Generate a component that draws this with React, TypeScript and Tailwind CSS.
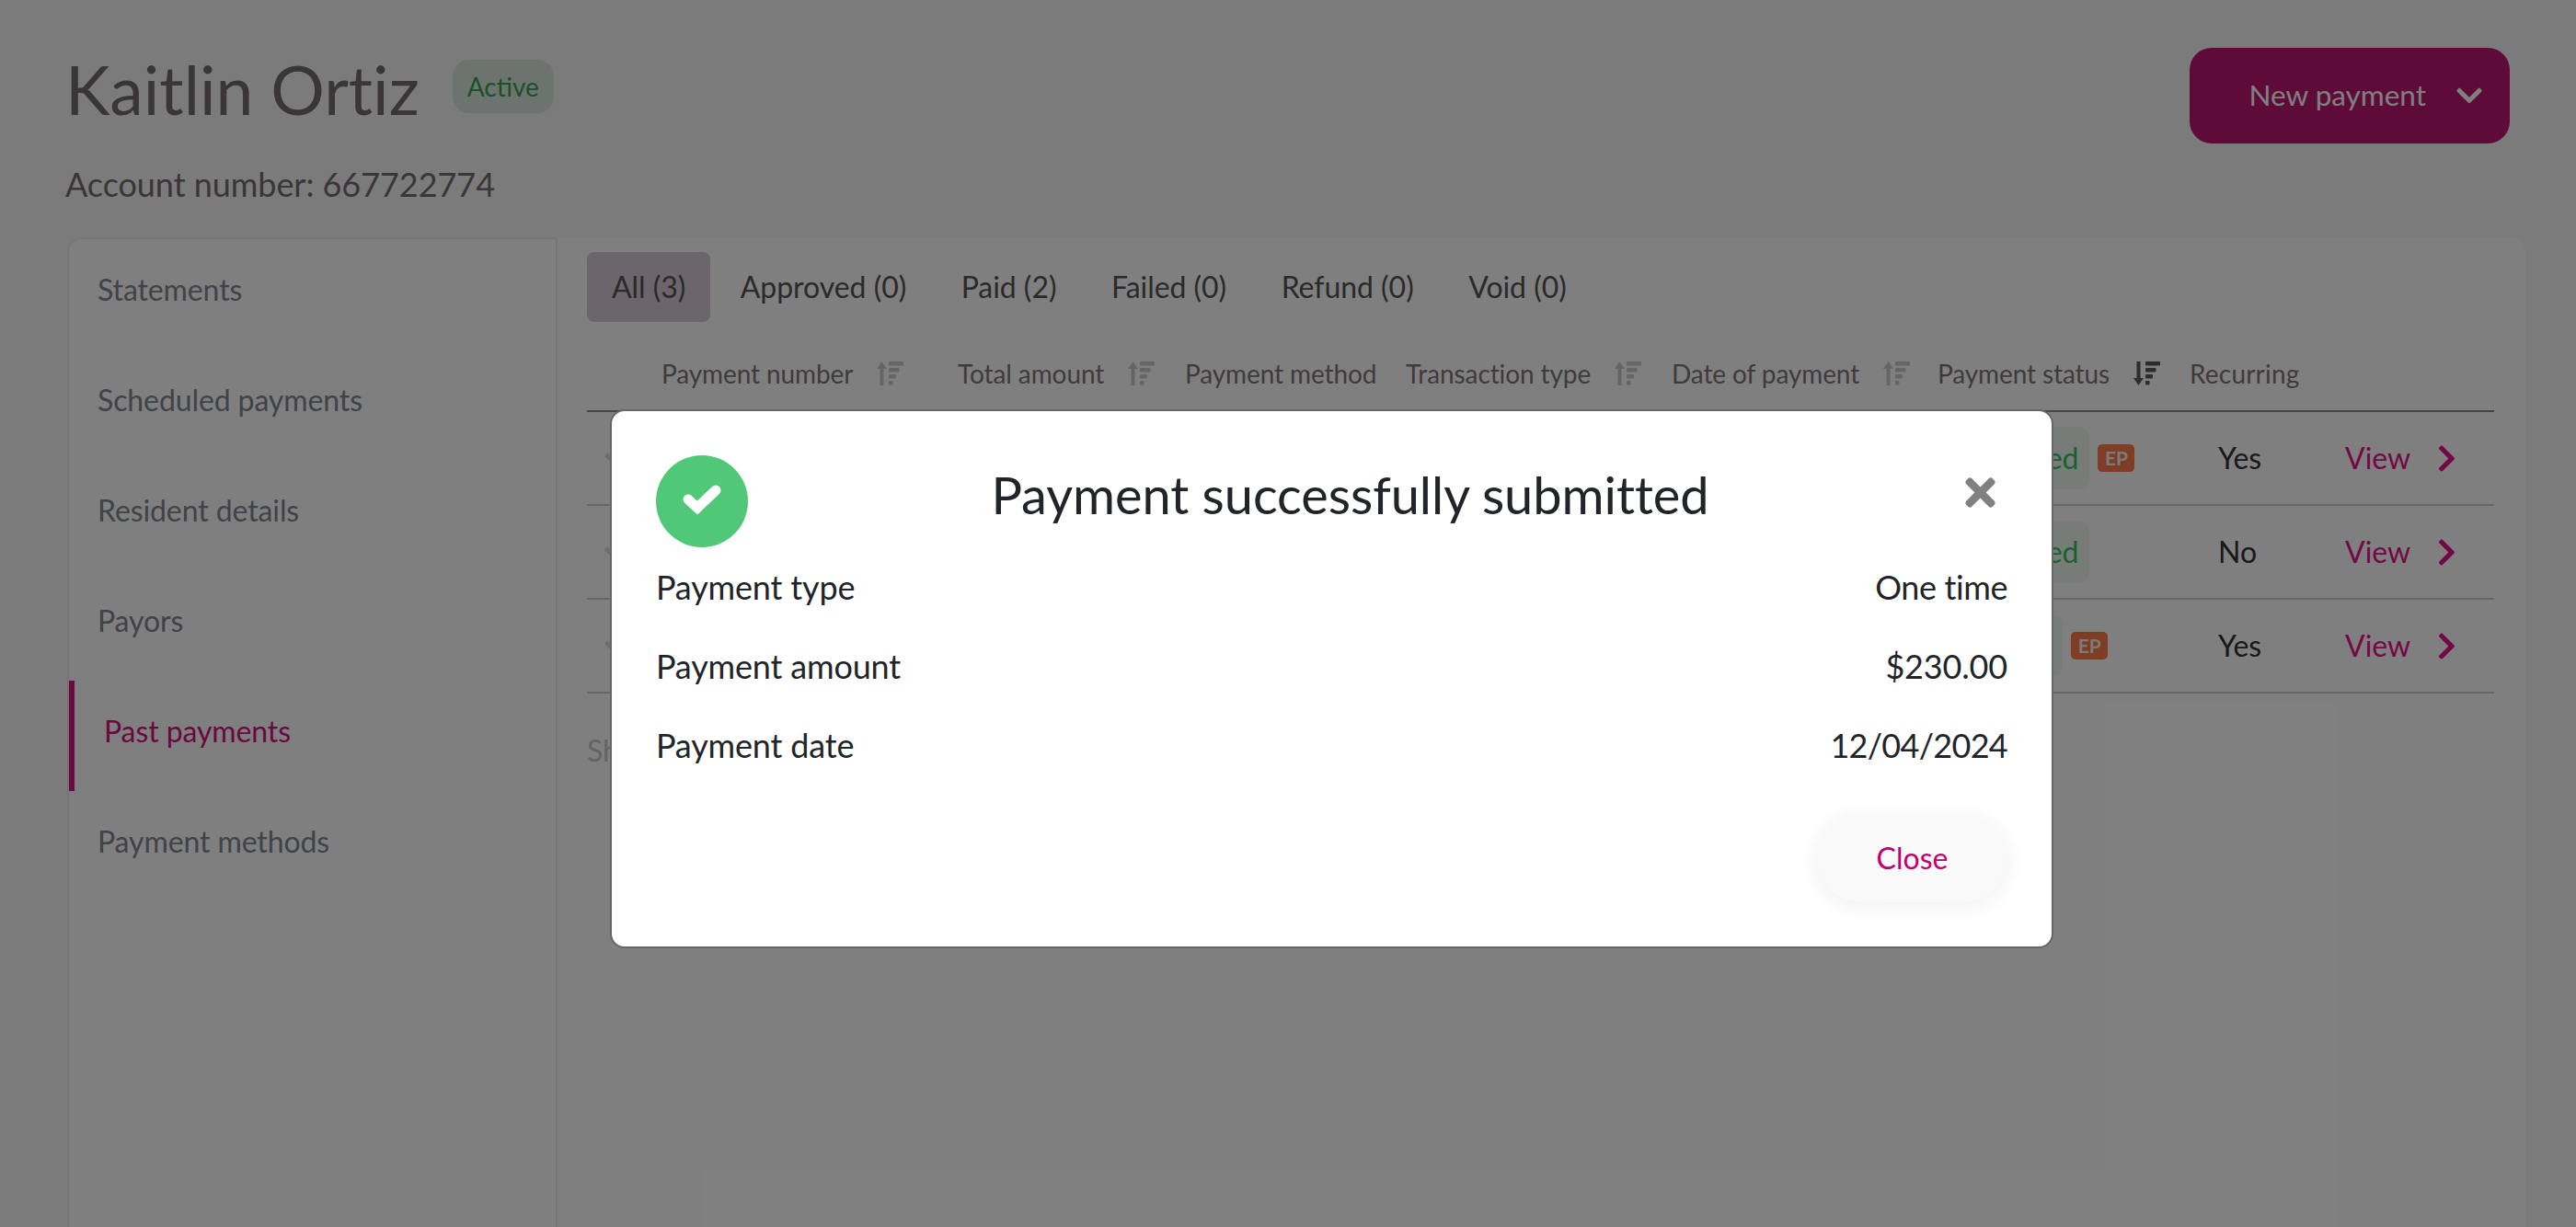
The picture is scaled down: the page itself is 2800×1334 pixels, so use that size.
import React from "react";
import { FaTimes, FaChevronDown, FaChevronRight } from "react-icons/fa";

function SortIcon({ active = false }: { active?: boolean }) {
  const c = active ? "#5a5a5a" : "#cbcbcb";
  return (
    <svg width="29" height="26" viewBox="0 0 29 26" fill={c} className="shrink-0">
      {active ? (
        <path d="M3.5 0h4v18h3.5L5.5 26 0 18h3.5z" />
      ) : (
        <path d="M3.5 26h4V8H11L5.5 0 0 8h3.5z" />
      )}
      <rect x="13" y="0" width="16" height="4.5" rx="1" />
      <rect x="13" y="7" width="11.5" height="4.5" rx="1" />
      <rect x="13" y="14" width="8" height="4.5" rx="1" />
      <rect x="13" y="21" width="4.5" height="4.5" rx="1" />
    </svg>
  );
}

const nav = ["Statements", "Scheduled payments", "Resident details", "Payors", "Past payments", "Payment methods"];
const tabs = ["All (3)", "Approved (0)", "Paid (2)", "Failed (0)", "Refund (0)", "Void (0)"];

const rows = [
  { status: "Processed", ep: true, rec: "Yes" },
  { status: "Processed", ep: false, rec: "No" },
  { status: "Pending", ep: true, rec: "Yes" },
];

export default function App() {
  return (
    <div className="relative h-screen overflow-hidden bg-[#f6f6f6] pl-[73px] pr-[55px] font-['Lato',sans-serif]">
      {/* Header */}
      <header className="flex h-[258px] items-start justify-between pr-[17px]">
        <div className="pt-[54px]">
          <div className="flex items-center">
            <h1 className="ml-[-2px] text-[73.3px] leading-[86px] font-normal text-[#746c6e] [font-variant-ligatures:none]">Kaitlin Ortiz</h1>
            <span className="ml-[36px] mt-[-7px] flex h-[58px] w-[110px] items-center justify-center rounded-[18px] bg-[#dae8de] text-[28px] text-[#32a450]">
              Active
            </span>
          </div>
          <p className="mt-[38px] ml-[-2px] text-[36px] leading-[44px] tracking-[-0.05px] text-[#746c6e]">Account number: 667722774</p>
        </div>
        <button className="mt-[52px] flex h-[104px] w-[348px] items-center justify-end rounded-[24px] bg-[#bc1672] pr-[28px] text-[31.5px] text-white">
          <span>New payment</span>
          <FaChevronDown className="ml-[31px] text-[32px]" />
        </button>
      </header>

      {/* Card */}
      <div className="flex h-[1076px] rounded-t-[16px] bg-white">
        <aside className="w-[533px] shrink-0 rounded-tl-[16px] border-t-2 border-r-2 border-l-2 border-[#ececec]">
          {nav.map((n) => {
            const active = n === "Past payments";
            return (
              <div
                key={n}
                className={
                  active
                    ? "flex h-[120px] items-center border-l-[6px] border-[#d6107e] pb-[11px] pl-[32px] text-[32px] tracking-[-0.1px] text-[#d6107e]"
                    : "flex h-[120px] items-center pb-[11px] pl-[31px] text-[32px] tracking-[-0.1px] text-[#80868f]"
                }
              >
                {n}
              </div>
            );
          })}
        </aside>

        <main className="min-w-0 flex-1 pt-[16px] pr-[34px] pl-[32px]">
          <div className="flex gap-[5.5px] tracking-[-0.04px]">
            {tabs.map((t, i) => (
              <div
                key={t}
                className={
                  i === 0
                    ? "flex h-[76px] items-center rounded-[8px] bg-[#d8cad8] px-[27px] text-[32px] text-[#555]"
                    : "flex h-[76px] items-center rounded-[8px] px-[27px] text-[32px] text-[#555]"
                }
              >
                {t}
              </div>
            ))}
          </div>

          <div className="grid h-[98px] grid-cols-[81px_322px_247px_240px_289px_289px_274px_1fr] items-center border-b-2 border-[#8a8a8a] pt-[16px] text-[28px] tracking-[-0.1px] text-[#7e767a]">
            <span />
            <span className="flex items-center gap-[26px]">Payment number <SortIcon /></span>
            <span className="flex items-center gap-[26px]">Total amount <SortIcon /></span>
            <span>Payment method</span>
            <span className="flex items-center gap-[26px]">Transaction type <SortIcon /></span>
            <span className="flex items-center gap-[26px]">Date of payment <SortIcon /></span>
            <span className="flex items-center gap-[26px]">Payment status <SortIcon active /></span>
            <span className="tracking-[0.2px]">Recurring</span>
          </div>

          {rows.map((r, i) => (
            <div
              key={i}
              className="grid h-[102px] grid-cols-[1468px_274px_1fr] items-center border-b-2 border-[#d0d0d0] text-[32px]"
            >
              <div className="flex items-center">
                <FaChevronDown className="ml-[17px] mt-[6px] text-[32px] text-[#d0dce4]" />
              </div>
              <div className="ml-[-1px] flex items-center gap-[9px]">
                <span className="flex h-[68px] items-center rounded-[12px] bg-[#eef8f1] px-[12px] text-[#30c462]">
                  {r.status}
                </span>
                {r.ep && (
                  <span className="flex h-[30px] w-[40px] items-center justify-center rounded-[5px] bg-[#ff7a4c] text-[21px] font-bold text-[#f4f4f4]">
                    EP
                  </span>
                )}
              </div>
              <div className="flex items-center">
                <span className="ml-[31px] w-[138px] text-[#333]">{r.rec}</span>
                <span className="text-[#e8108e]">View</span>
                <FaChevronRight className="ml-[23px] text-[33px] text-[#e8108e]" />
              </div>
            </div>
          ))}

          <p className="mt-[38px] text-[32px] text-[#c8c8c8]">Showing 1 to 3 of 3</p>
        </main>
      </div>

      {/* Overlay */}
      <div className="absolute inset-0 bg-black/50" />

      {/* Modal */}
      <div className="absolute top-[445px] left-[663px] w-[1569px] rounded-[16px] border-2 border-[#666] bg-white p-[48px] text-[#212529]">
        <div className="flex h-[100px] items-center justify-between">
          <div className="flex h-[100px] w-[100px] items-center justify-center rounded-full bg-[#50c878]">
            <svg width="100" height="100" viewBox="0 0 100 100" fill="none">
              <path d="M35 48 45 57 65 38" stroke="#fff" strokeWidth="11" strokeLinecap="round" strokeLinejoin="miter" />
            </svg>
          </div>
          <h2 className="mb-[14px] text-[56px] leading-[68px] font-normal tracking-[-0.06px] [font-variant-ligatures:none]">Payment successfully submitted</h2>
          <div className="mb-[20px] flex w-[60px] justify-center">
            <FaTimes className="text-[47px] text-[#808080]" />
          </div>
        </div>
        <div className="text-[36px] tracking-[-0.17px]">
          <div className="flex h-[86px] items-center justify-between"><span>Payment type</span><span className="tracking-[-0.4px]">One time</span></div>
          <div className="flex h-[86px] items-center justify-between"><span>Payment amount</span><span>$230.00</span></div>
          <div className="flex h-[86px] items-center justify-between"><span>Payment date</span><span className="tracking-[-0.7px]">12/04/2024</span></div>
        </div>
        <div className="mt-[32px] flex justify-end">
          <button className="h-[96px] w-[207px] rounded-full bg-[#f9f9fa] text-[32px] text-[#c4006e] shadow-[0_4px_20px_rgba(90,40,70,0.08)]">
            Close
          </button>
        </div>
      </div>
    </div>
  );
}
